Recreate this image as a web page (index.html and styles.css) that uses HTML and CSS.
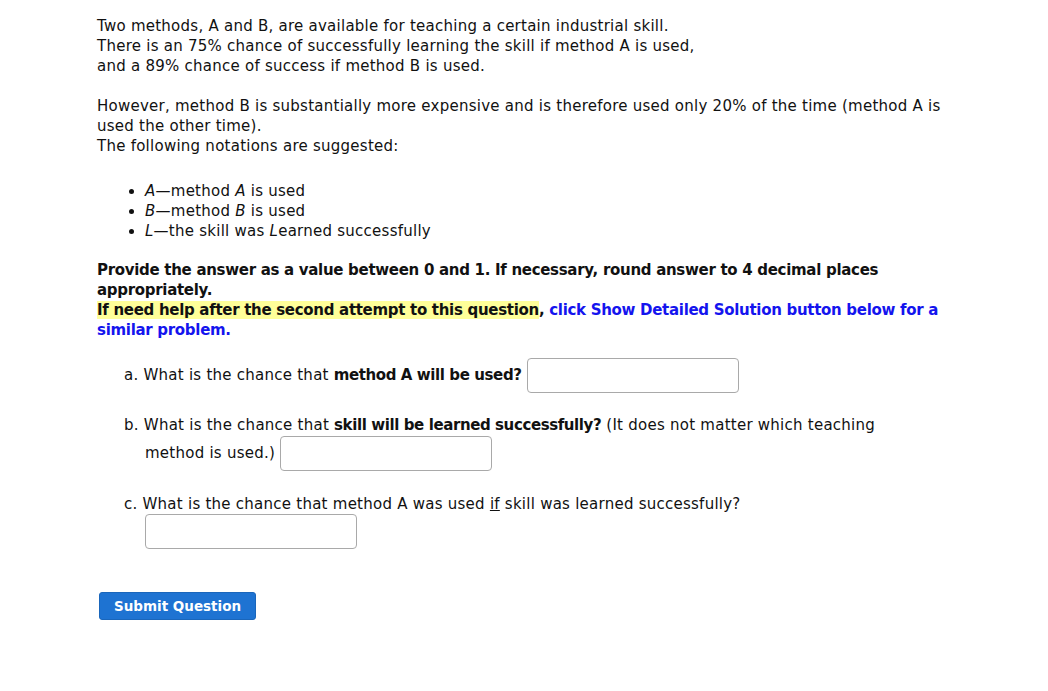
FILE: index.html
```
<!DOCTYPE html>
<html>
<head>
<meta charset="utf-8">
<link rel="stylesheet" href="styles.css">
</head>
<body>
<div class="page">
  <p class="para">Two methods, A and B, are available for teaching a certain industrial skill.<br>There is an 75% chance of successfully learning the skill if method A is used,<br>and a 89% chance of success if method B is used.</p>
  <p class="para">However, method B is substantially more expensive and is therefore used only 20% of the time (method A is used the other time).<br>The following notations are suggested:</p>
  <ul class="notes">
    <li><i>A</i>—method <i>A</i> is used</li>
    <li><i>B</i>—method <i>B</i> is used</li>
    <li><i>L</i>—the skill was <i>L</i>earned successfully</li>
  </ul>
  <p class="para bold">Provide the answer as a value between 0 and 1. If necessary, round answer to 4 decimal places appropriately.<br><span class="hl">If need help after the second attempt to this question</span>, <span class="link">click Show Detailed Solution button below for a similar problem.</span></p>
  <div class="q qa">a. What is the chance that <b>method A will be used?</b> <span class="box"></span></div>
  <div class="q qb">b. What is the chance that <b>skill will be learned successfully?</b> (It does not matter which teaching method is used.) <span class="box"></span></div>
  <div class="q qc">c. What is the chance that method A was used <u>if</u> skill was learned successfully? <span class="box"></span></div>
  <div class="actions"><span class="btn">Submit Question</span></div>
</div>
</body>
</html>
```
FILE: styles.css
```
html, body { margin: 0; padding: 0; background: #fff; }
body {
  font-family: "DejaVu Sans", "Noto Sans", sans-serif;
  font-size: 15px;
  letter-spacing: 0.25px;
  line-height: 20px;
  color: #111;
}
.page { width: 850px; padding: 16px 0 0 97px; }
.para { margin: 0 0 20px 0; }
.bold { font-weight: 700; letter-spacing: -0.3px; margin-bottom: 18px; }
.notes { margin: 25px 0 19px 0; padding-left: 48px; }
.notes li { line-height: 20px; }
.hl { background: #ffff99; }
.link { color: #1414ee; }
.q { padding-left: 48px; padding-right: 28px; text-indent: -21px; line-height: 20px; }
.q b { font-weight: 700; letter-spacing: -0.4px; }
.box {
  display: inline-block;
  width: 212px; height: 35px;
  box-sizing: border-box;
  border: 1px solid #a9a9a9;
  border-radius: 4px;
  vertical-align: middle;
  text-indent: 0;
}
.qa { margin-bottom: 18px; }
.qb { line-height: 28px; margin-bottom: 27px; }
.qb .box { margin: -4px 0; }
.qc { line-height: 20px; }
.actions { margin-top: 43px; padding-left: 2px; }
.btn {
  display: inline-block;
  background: #1e73d2;
  color: #fff;
  font-size: 13.5px;
  font-weight: 700;
  letter-spacing: 0;
  border: 1px solid #1a66bb;
  border-radius: 3px;
  padding: 3px 14px;
  line-height: 20px;
}
```
